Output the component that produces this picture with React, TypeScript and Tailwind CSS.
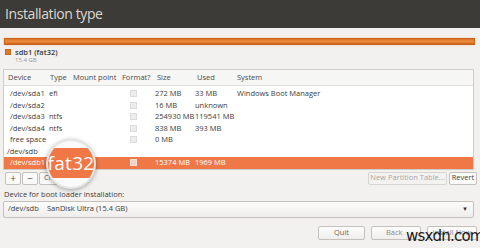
import React from "react";

const rows = [
  { dev: "/dev/sda1", indent: true, type: "efi", size: "272 MB", used: "33 MB", sys: "Windows Boot Manager" },
  { dev: "/dev/sda2", indent: true, type: "", size: "16 MB", used: "unknown", sys: "" },
  { dev: "/dev/sda3", indent: true, type: "ntfs", size: "254930 MB", used: "119541 MB", sys: "" },
  { dev: "/dev/sda4", indent: true, type: "ntfs", size: "838 MB", used: "393 MB", sys: "" },
  { dev: "free space", indent: true, type: "", size: "0 MB", used: "", sys: "" },
  { dev: "/dev/sdb", indent: false, type: "", size: "", used: "", sys: "", nobox: true },
];

function Check({ sel }: { sel?: boolean }) {
  return (
    <div
      className={
        sel
          ? "w-[7px] h-[7px] bg-[#f6d2c2] border border-[#f9e3d8]"
          : "w-[7px] h-[7px] bg-[#ececec] border border-[#dcdcdc]"
      }
    />
  );
}

export default function App() {
  return (
    <div className="relative w-[480px] h-[248px] overflow-hidden bg-[#f2f1f0] font-['Open_Sans',sans-serif] text-[#3c3c3c] whitespace-nowrap">
      {/* title bar */}
      <div className="h-[28px] bg-[#3d3b37] flex items-center pl-[5px]">
        <span className="text-[14px] leading-none text-[#dcd8cf] tracking-[-0.4px]">Installation type</span>
      </div>

      <div className="px-[3px]">
        {/* partition bar */}
        <div className="mt-[10px] ml-[1px] w-[471px] h-[7px] bg-gradient-to-b from-[#d9701f] via-[#ee8a3c] to-[#c9661c] border border-[#c7631c] shadow-[0_0_2px_#f5c08f]" />

        {/* legend */}
        <div className="mt-[2px] ml-[2px] flex items-start gap-[4px]">
          <div className="mt-[2px] w-[6px] h-[6px] bg-[#e07a2a] border border-[#c4661e]" />
          <div className="flex flex-col">
            <span className="text-[7.5px] leading-[10px] font-semibold text-[#3a3a3a]">sdb1 (fat32)</span>
            <span className="text-[6px] leading-[7px] text-[#9a9a9a]">15.4 GB</span>
          </div>
        </div>

        {/* table */}
        <div className="mt-[5px] w-[471px] border border-[#cfcdca] bg-white text-[7.5px] leading-none">
          <div className="flex h-[16px] items-center bg-[#f6f6f5] border-b border-[#e2e0dd] text-[#4a4a4a]">
            <div className="w-[43px] pl-[4px]">Device</div>
            <div className="w-[23px] pl-[3px]">Type</div>
            <div className="w-[49px] pl-[3px]">Mount point</div>
            <div className="w-[35px] pl-[3px]">Format?</div>
            <div className="w-[40px] pl-[3px]">Size</div>
            <div className="w-[40px] pl-[3px]">Used</div>
            <div className="flex-1 pl-[3px]">System</div>
          </div>
          <div className="pt-[2px]">
            {rows.map((r) => (
              <div key={r.dev} className="flex h-[11.5px] items-center">
                <div className={r.indent ? "w-[44px] pl-[6px]" : "w-[44px] pl-[3px]"}>{r.dev}</div>
                <div className="w-[22px] pl-[1px]">{r.type}</div>
                <div className="w-[49px]" />
                <div className="w-[35px] pl-[11px] flex items-center">{r.nobox ? null : <Check />}</div>
                <div className="w-[40px] pl-[1px]">{r.size}</div>
                <div className="w-[40px] pl-[1px]">{r.used}</div>
                <div className="flex-1 pl-[3px]">{r.sys}</div>
              </div>
            ))}
            <div className="flex h-[11.5px] items-center bg-[#f07746] text-white">
              <div className="w-[44px] pl-[6px]">/dev/sdb1</div>
              <div className="w-[22px] pl-[1px]">fat32</div>
              <div className="w-[49px]" />
              <div className="w-[35px] pl-[11px] flex items-center"><Check sel /></div>
              <div className="w-[40px] pl-[1px]">15374 MB</div>
              <div className="w-[40px] pl-[1px]">1969 MB</div>
              <div className="flex-1" />
            </div>
          </div>
        </div>

        {/* table buttons */}
        <div className="mt-[2px] flex items-center text-[7.5px] leading-none">
          <div className="flex">
            <div className="ml-[2px] w-[16px] h-[13px] flex items-center justify-center border border-[#c4c1bc] rounded-[2px] bg-[#f9f9f8] text-[#555] text-[10px]">+</div>
            <div className="ml-[1px] w-[16px] h-[13px] flex items-center justify-center border border-[#c4c1bc] rounded-[2px] bg-[#f9f9f8] text-[#555] text-[10px]">−</div>
            <div className="ml-[1px] w-[40px] h-[13px] flex items-center pl-[4px] border border-[#c4c1bc] rounded-[2px] bg-[#f9f9f8] text-[#555] overflow-hidden">Change...</div>
          </div>
          <div className="ml-auto flex gap-[2px]">
            <div className="w-[79px] h-[13px] flex items-center justify-center border border-[#d8d6d3] rounded-[2px] bg-[#f3f2f1] text-[#aaa7a3]">New Partition Table...</div>
            <div className="w-[28px] h-[13px] flex items-center justify-center border border-[#c4c1bc] rounded-[2px] bg-[#fbfbfa] text-[#444]">Revert</div>
          </div>
        </div>

        {/* boot loader */}
        <div className="mt-[4px] ml-[1px] text-[7.5px] leading-[10px] text-[#3c3c3c]">Device for boot loader installation:</div>
        <div className="mt-[2px] w-[471px] h-[17px] flex items-center border border-[#c4c1bc] rounded-[2px] bg-gradient-to-b from-[#fbfbfa] to-[#efeeec] text-[7.5px] text-[#3c3c3c]">
          <span className="pl-[4px] w-[43px]">/dev/sdb</span>
          <span>SanDisk Ultra (15.4 GB)</span>
          <span className="ml-auto mr-[5px] text-[6px] text-[#333]">▼</span>
        </div>

        {/* bottom buttons */}
        <div className="mt-[8px] flex justify-end gap-[6px] text-[7.5px] leading-none">
          <div className="w-[47px] h-[14px] flex items-center justify-center border border-[#c4c1bc] rounded-[2px] bg-gradient-to-b from-[#fdfdfd] to-[#efeeec] text-[#666]">Quit</div>
          <div className="w-[50px] h-[14px] flex items-center pl-[14px] border border-[#c4c1bc] rounded-[2px] bg-gradient-to-b from-[#fdfdfd] to-[#efeeec] text-[#888]">Back</div>
          <div className="w-[50px] h-[14px] flex items-center justify-center border border-[#c4c1bc] rounded-[2px] bg-gradient-to-b from-[#fdfdfd] to-[#efeeec] text-[#888]">Install Now</div>
        </div>
      </div>

      {/* magnifier */}
      <div className="absolute left-[46px] top-[139px] w-[50px] h-[50px] rounded-full overflow-hidden bg-[#fafafa] border-[2px] border-[#e6e6e6] shadow-[0_1px_4px_rgba(0,0,0,0.35)]">
        <div className="absolute left-0 right-0 top-[7px] h-[30px] bg-[#f07746] flex items-center justify-center">
          <span className="text-[19px] leading-none text-white tracking-[0.3px]">fat32</span>
        </div>
      </div>

      {/* watermark */}
      <div className="absolute left-[406px] top-[229px] text-[15px] leading-none text-[#1a1a1a] font-['DejaVu_Sans',sans-serif] tracking-[-0.8px]">wsxdn.com</div>
    </div>
  );
}
